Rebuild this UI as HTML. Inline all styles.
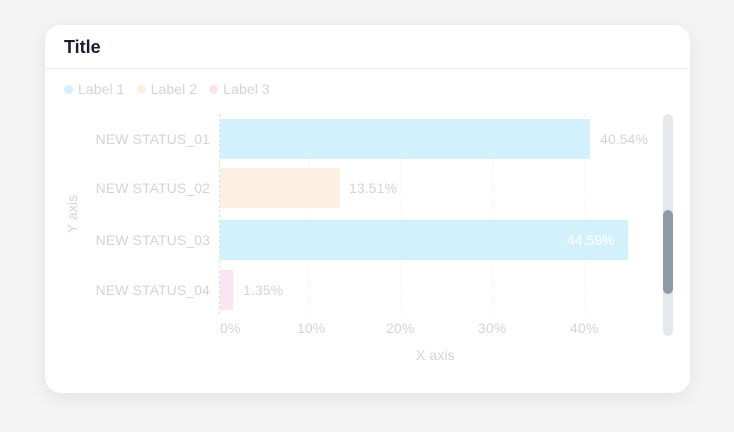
<!DOCTYPE html>
<html><head><style>
*{margin:0;padding:0;box-sizing:border-box}
body{width:734px;height:432px;background:#f4f4f5;font-family:"Liberation Sans",sans-serif;position:relative;overflow:hidden}
.card{position:absolute;left:45px;top:25px;width:645px;height:368px;background:#fff;border-radius:16px;box-shadow:0 4px 18px rgba(0,0,0,0.08)}
.a{position:absolute;white-space:nowrap}
.t{color:#d4d4d8;font-size:14px;letter-spacing:0.1px}
.bar{position:absolute;left:220px;height:40px}
.g{position:absolute;top:114px;height:200px;border-left:1px dashed #f6f6f7}
.dot{display:inline-block;width:9px;height:9px;border-radius:50%;margin-right:5px;vertical-align:0}
</style></head><body>
<div class="card"></div>
<div class="a" style="left:64px;top:37px;font-size:18px;font-weight:bold;color:#1a1d2b">Title</div>
<div class="a" style="left:45px;top:68px;width:645px;border-top:1px solid #eeeef0"></div>
<div class="a t" style="left:64px;top:81px"><span class="dot" style="background:#d3f1fd"></span>Label 1&nbsp;&nbsp;&nbsp;<span class="dot" style="background:#fdeedf"></span>Label 2&nbsp;&nbsp;&nbsp;<span class="dot" style="background:#f8e3f0"></span>Label 3</div>
<div class="g" style="left:308px"></div><div class="g" style="left:400px"></div><div class="g" style="left:492px"></div><div class="g" style="left:584px"></div>
<div class="g" style="left:219px;border-left-color:#e2dfe6"></div>
<div class="bar" style="top:119px;width:370px;background:#d3f1fd"></div>
<div class="bar" style="top:168px;width:120px;background:#fdf0e2"></div>
<div class="bar" style="top:220px;width:408px;background:#d3f1fd"></div>
<div class="bar" style="top:270px;width:13px;background:#f8e6f1"></div>
<div class="a t" style="right:524px;top:131px">NEW STATUS_01</div>
<div class="a t" style="right:524px;top:180px">NEW STATUS_02</div>
<div class="a t" style="right:524px;top:232px">NEW STATUS_03</div>
<div class="a t" style="right:524px;top:282px">NEW STATUS_04</div>
<div class="a t" style="left:600px;top:131px">40.54%</div>
<div class="a t" style="left:349px;top:180px">13.51%</div>
<div class="a" style="left:567px;top:232px;font-size:14px;color:#fff">44.59%</div>
<div class="a t" style="left:243px;top:282px">1.35%</div>
<div class="a t" style="left:220px;top:320px">0%</div>
<div class="a t" style="left:297px;top:320px">10%</div>
<div class="a t" style="left:386px;top:320px">20%</div>
<div class="a t" style="left:478px;top:320px">30%</div>
<div class="a t" style="left:570px;top:320px">40%</div>
<div class="a t" style="left:416px;top:347px">X axis</div>
<div class="a t" style="left:53px;top:206px;transform:rotate(-90deg);transform-origin:center">Y axis</div>
<div class="a" style="left:663px;top:114px;width:10px;height:222px;border-radius:5px;background:#e6e8ec"></div>
<div class="a" style="left:663px;top:210px;width:10px;height:84px;border-radius:5px;background:#8e9aa8"></div>
</body></html>
